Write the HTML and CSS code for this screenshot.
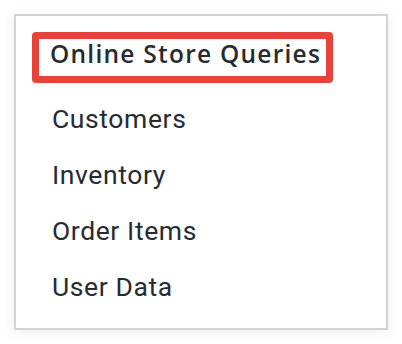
FILE: index.html
```html
<!DOCTYPE html>
<html lang="en">
<head>
  <meta charset="UTF-8" />
  <title>Online Store Queries</title>
  <link rel="stylesheet" href="styles.css">
</head>
<body>

<div class="menu-card">
  <div class="menu-title">Online Store Queries</div>
  <ul class="menu-list">
    <li>Customers</li>
    <li>Inventory</li>
    <li>Order Items</li>
    <li>User Data</li>
  </ul>
</div>

</body>
</html>
```

FILE: styles.css
```css
body {
  margin: 0;
  padding: 14px;
  background: #fff;
  font-family: Roboto, 'Liberation Sans', sans-serif;
  color: #262b31;
}
.menu-card {
  width: 354px;
  height: 296px;
  padding: 16px 0 0 16px;
  border: 2px solid #d3d3d3;
  box-shadow: 0 2px 12px rgba(0, 0, 0, 0.08);
}
.menu-title {
  display: inline-block;
  border: 7px solid #e8433a;
  border-radius: 4px;
  line-height: 29px;
  padding: 0 5px 8px 11px;
  font-family: 'Open Sans', sans-serif;
  font-weight: 600;
  font-size: 24.5px;
  letter-spacing: 1.25px;
  white-space: nowrap;
}
.menu-list {
  list-style: none;
  margin: 8px 0 0 0;
  padding: 0 0 0 20px;
}
.menu-list li {
  font-size: 26.5px;
  letter-spacing: 0.6px;
  line-height: 56px;
}
```
